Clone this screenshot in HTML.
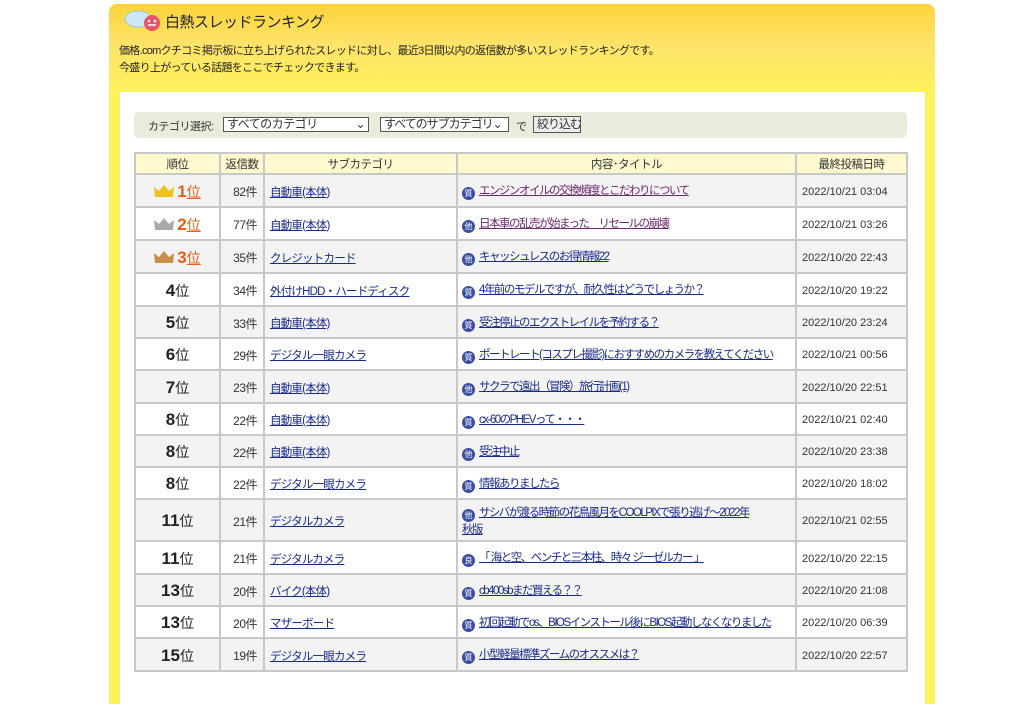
<!DOCTYPE html>
<html><head><meta charset="utf-8"><style>
body{margin:0;background:#fff;font-family:"Liberation Sans","Noto Sans CJK JP",sans-serif;font-size:12px;color:#333;}
.panel{position:absolute;left:109px;top:4px;width:826px;height:700px;background:linear-gradient(#fdd33a 0,#fee36a 40px,#fff15c 90px);border-radius:8px 8px 0 0;}
.title{position:absolute;left:56px;top:7px;font-size:15px;color:#222;letter-spacing:-0.5px}
.desc{position:absolute;left:10px;top:39px;font-size:11px;line-height:17px;color:#222;letter-spacing:-0.7px;white-space:nowrap}
.inner{position:absolute;left:11px;top:88px;width:805px;height:620px;background:#fff;}
.filter{position:absolute;left:134px;top:112px;width:773px;height:26px;background:#ebebdd;border-radius:5px;font-size:11px;white-space:nowrap;letter-spacing:-0.5px}
.filter span{position:absolute;top:6px}
.sel{position:absolute;top:5px;height:15px;border:1px solid #555;background:#fff;font-size:12px;line-height:13px;padding-left:3px;box-sizing:border-box;white-space:nowrap;overflow:hidden}
table{position:absolute;left:134px;top:152px;border-collapse:collapse;width:774px;table-layout:fixed}
td,th{border:2px solid #c8c8c8;padding:0;white-space:nowrap;overflow:hidden}
th{background:#fff9d0;font-weight:normal;height:19px;font-size:11.5px;color:#333;letter-spacing:-0.5px}
tr.g td{background:#f3f3f3}
td.r{text-align:center;font-size:17px;font-weight:bold;color:#222;padding-top:2px}
td.r small{font-size:14px;font-weight:normal}
td.r.t{color:#e0601a}td.r.t small{color:#e0601a;text-decoration:underline}
td.n{text-align:right;padding-right:6px;font-size:12px;letter-spacing:-0.5px;padding-top:2px}
td.s{padding-left:5px;font-size:11.5px;letter-spacing:-0.8px;padding-top:2px}
a{color:#1a2a8c;text-decoration:underline}
a.v{color:#6b2a6b}
td.c{padding-left:4px;line-height:16px;font-size:11.5px;letter-spacing:-1.5px;padding-top:2px}
td.d{padding-left:5px;font-size:11px;padding-top:2px}
.ic{display:inline-block;width:13px;height:13px;border-radius:50%;background:#3b4ea0;color:#fff;font-size:8px;line-height:13px;text-align:center;vertical-align:-2px;margin-right:4px;text-decoration:none;letter-spacing:0}
.cr{display:inline-block;width:20px;height:14px;vertical-align:-1px;margin-right:3px}
</style></head><body>
<div class="panel">
<svg style="position:absolute;left:14px;top:4px" width="40" height="26"><ellipse cx="15" cy="11" rx="13" ry="8" fill="#cde8f4" stroke="#9cc" /><circle cx="29" cy="15" r="8" fill="#e8536b"/><circle cx="26" cy="13" r="1.3" fill="#fff"/><circle cx="32" cy="13" r="1.3" fill="#fff"/><path d="M25 17h8" stroke="#fff" stroke-width="1.5"/></svg>
<div class="title">白熱スレッドランキング</div>
<div class="desc">価格.comクチコミ掲示板に立ち上げられたスレッドに対し、最近3日間以内の返信数が多いスレッドランキングです。<br>今盛り上がっている話題をここでチェックできます。</div>
<div class="inner"></div>
</div>
<div class="filter"><span style="left:14px">カテゴリ選択:</span>
<div class="sel" style="left:89px;width:146px">すべてのカテゴリ<span style="right:3px;top:0;position:absolute">⌄</span></div>
<div class="sel" style="left:246px;width:129px;letter-spacing:-1px">すべてのサブカテゴリ⌄</div>
<span style="left:382px">で</span>
<div class="sel" style="left:399px;width:48px;background:#eee;top:4px;height:17px;line-height:15px;letter-spacing:-1px">絞り込む</div></div>
<table>
<tr><th style="width:83px">順位</th><th style="width:42px">返信数</th><th style="width:191px">サブカテゴリ</th><th style="width:337px">内容･タイトル</th><th>最終投稿日時</th></tr>
<tr class="g" style="height:33px"><td class="r t"><svg class="cr"><path d="M1 13L0 3l5 4 5-6 5 6 5-4-1 10z" fill="#f0c020"/></svg>1<small>位</small></td><td class="n">82件</td><td class="s"><a>自動車(本体)</a></td><td class="c"><span class="ic">質</span><a class="v">エンジンオイルの交換頻度とこだわりについて</a></td><td class="d">2022/10/21 03:04</td></tr>
<tr style="height:33px"><td class="r t"><svg class="cr"><path d="M1 13L0 3l5 4 5-6 5 6 5-4-1 10z" fill="#aaa"/></svg>2<small>位</small></td><td class="n">77件</td><td class="s"><a>自動車(本体)</a></td><td class="c"><span class="ic">他</span><a class="v">日本車の乱売が始まった　リセールの崩壊</a></td><td class="d">2022/10/21 03:26</td></tr>
<tr class="g" style="height:33px"><td class="r t"><svg class="cr"><path d="M1 13L0 3l5 4 5-6 5 6 5-4-1 10z" fill="#c8904a"/></svg>3<small>位</small></td><td class="n">35件</td><td class="s"><a>クレジットカード</a></td><td class="c"><span class="ic">他</span><a>キャッシュレスのお得情報22</a></td><td class="d">2022/10/20 22:43</td></tr>
<tr style="height:33px"><td class="r">4<small>位</small></td><td class="n">34件</td><td class="s"><a>外付けHDD・ハードディスク</a></td><td class="c"><span class="ic">質</span><a>4年前のモデルですが、耐久性はどうでしょうか？</a></td><td class="d">2022/10/20 19:22</td></tr>
<tr class="g" style="height:32px"><td class="r">5<small>位</small></td><td class="n">33件</td><td class="s"><a>自動車(本体)</a></td><td class="c"><span class="ic">質</span><a>受注停止のエクストレイルを予約する？</a></td><td class="d">2022/10/20 23:24</td></tr>
<tr style="height:32px"><td class="r">6<small>位</small></td><td class="n">29件</td><td class="s"><a>デジタル一眼カメラ</a></td><td class="c"><span class="ic">質</span><a>ポートレート(コスプレ撮影)におすすめのカメラを教えてください</a></td><td class="d">2022/10/21 00:56</td></tr>
<tr class="g" style="height:33px"><td class="r">7<small>位</small></td><td class="n">23件</td><td class="s"><a>自動車(本体)</a></td><td class="c"><span class="ic">他</span><a>サクラで遠出（冒険）旅行計画(1)</a></td><td class="d">2022/10/20 22:51</td></tr>
<tr style="height:32px"><td class="r">8<small>位</small></td><td class="n">22件</td><td class="s"><a>自動車(本体)</a></td><td class="c"><span class="ic">質</span><a>cx-60のPHEVって・・・</a></td><td class="d">2022/10/21 02:40</td></tr>
<tr class="g" style="height:32px"><td class="r">8<small>位</small></td><td class="n">22件</td><td class="s"><a>自動車(本体)</a></td><td class="c"><span class="ic">他</span><a>受注中止</a></td><td class="d">2022/10/20 23:38</td></tr>
<tr style="height:32px"><td class="r">8<small>位</small></td><td class="n">22件</td><td class="s"><a>デジタル一眼カメラ</a></td><td class="c"><span class="ic">質</span><a>情報ありましたら</a></td><td class="d">2022/10/20 18:02</td></tr>
<tr class="g" style="height:42px"><td class="r">11<small>位</small></td><td class="n">21件</td><td class="s"><a>デジタルカメラ</a></td><td class="c"><span class="ic">他</span><a>サシバが渡る時節の花鳥風月をCOOLPIXで張り逃げ～2022年<br>秋版</a></td><td class="d">2022/10/21 02:55</td></tr>
<tr style="height:33px"><td class="r">11<small>位</small></td><td class="n">21件</td><td class="s"><a>デジタルカメラ</a></td><td class="c"><span class="ic">良</span><a>「 海と空、ベンチと三本柱、時々 ジーゼルカー 」</a></td><td class="d">2022/10/20 22:15</td></tr>
<tr class="g" style="height:32px"><td class="r">13<small>位</small></td><td class="n">20件</td><td class="s"><a>バイク(本体)</a></td><td class="c"><span class="ic">質</span><a>cb400sbまだ買える？？</a></td><td class="d">2022/10/20 21:08</td></tr>
<tr style="height:32px"><td class="r">13<small>位</small></td><td class="n">20件</td><td class="s"><a>マザーボード</a></td><td class="c"><span class="ic">質</span><a>初回起動でos、BIOSインストール後にBIOS起動しなくなりました</a></td><td class="d">2022/10/20 06:39</td></tr>
<tr class="g" style="height:33px"><td class="r">15<small>位</small></td><td class="n">19件</td><td class="s"><a>デジタル一眼カメラ</a></td><td class="c"><span class="ic">質</span><a>小型軽量標準ズームのオススメは？</a></td><td class="d">2022/10/20 22:57</td></tr>
</table>
</body></html>
